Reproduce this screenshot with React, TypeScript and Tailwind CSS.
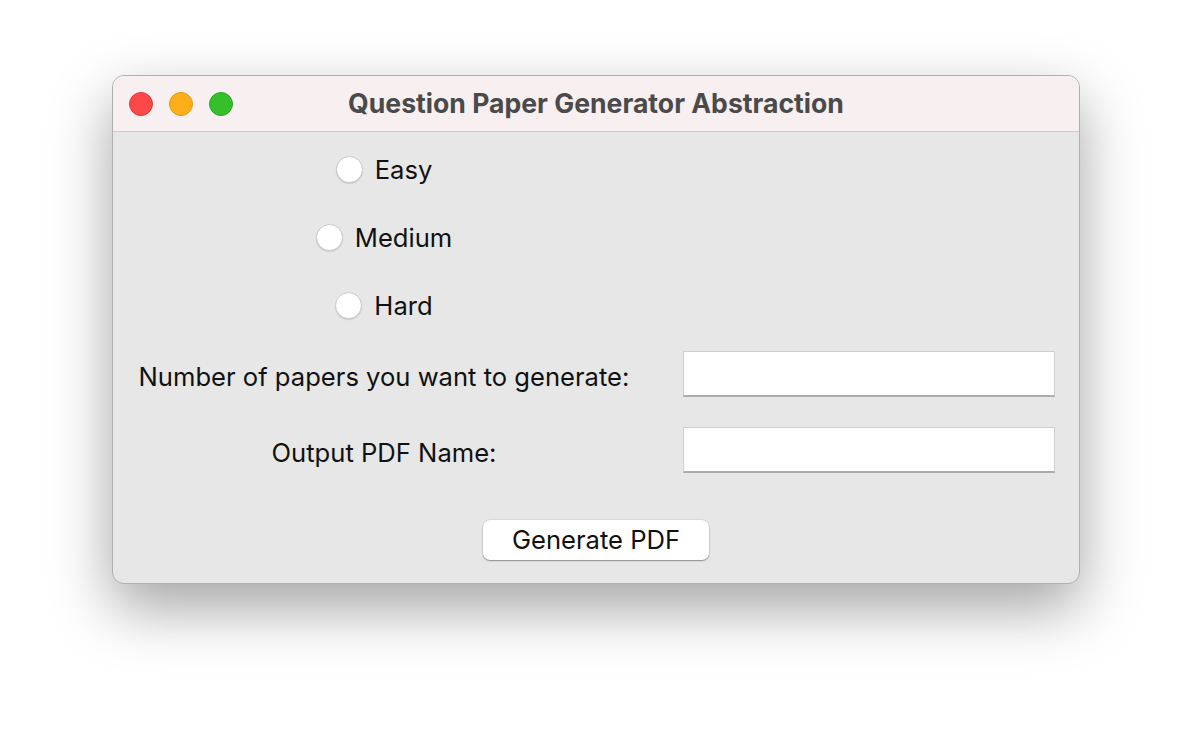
import React from "react";

const font = { fontFamily: "Inter, 'Noto Sans', 'Liberation Sans', sans-serif" };

const TrafficLights = () => (
  <div className="flex items-center gap-[16px] pl-[16px]">
    <span className="w-[24px] h-[24px] rounded-full bg-[#fd4848] border border-[#e0393a]" />
    <span className="w-[24px] h-[24px] rounded-full bg-[#fdae18] border border-[#e09a12]" />
    <span className="w-[24px] h-[24px] rounded-full bg-[#35c02b] border border-[#2ba723]" />
  </div>
);

const Radio = ({ label }: { label: string }) => (
  <div className="h-[68px] flex items-center justify-center gap-[12px]">
    <span className="w-[27px] h-[27px] rounded-full bg-white border border-[#c9c9c9] shadow-[0_1px_1px_rgba(0,0,0,0.12)]" />
    <span className="text-[25.6px] text-[#111] pt-[3px]">{label}</span>
  </div>
);

const Entry = () => (
  <div className="w-[372px] h-[46px] bg-white border border-[#cfcfcf] border-b-2 border-b-[#ababab]" />
);

export default function App() {
  return (
    <div style={font} className="w-[1192px] h-[732px] bg-white flex justify-center pt-[75px]">
      <div className="w-[968px] h-[509px] rounded-[12px] overflow-hidden bg-[#e7e7e7] border border-[#b0b0b0] shadow-[0_24px_60px_rgba(0,0,0,0.36)] flex flex-col">
        <div className="h-[56px] shrink-0 grid grid-cols-[1fr_auto_1fr] items-center bg-[#f8eff0] border-b border-[#cbcbcb]">
          <TrafficLights />
          <div className="text-[26.6px] font-bold text-[#4a4a4a]">
            Question Paper Generator Abstraction
          </div>
          <div />
        </div>

        <div className="flex flex-col pt-[3px]">
          <div className="ml-[14px] w-[514px] flex flex-col">
            <Radio label="Easy" />
            <Radio label="Medium" />
            <Radio label="Hard" />
          </div>

          <div className="mt-[12px] flex items-center">
            <div className="ml-[14px] w-[514px] text-center text-[25.6px] text-[#111] pt-[7px]">
              Number of papers you want to generate:
            </div>
            <div className="ml-[42px]">
              <Entry />
            </div>
          </div>

          <div className="mt-[30px] flex items-center">
            <div className="ml-[14px] w-[514px] text-center text-[25.6px] text-[#111] pt-[7px]">
              Output PDF Name:
            </div>
            <div className="ml-[42px]">
              <Entry />
            </div>
          </div>

          <div className="mt-[47px] flex justify-center">
            <button className="w-[226px] h-[40px] rounded-[7px] bg-white text-[25.6px] text-[#111] shadow-[0_1px_1.5px_rgba(0,0,0,0.35),0_0_0_0.5px_rgba(0,0,0,0.12)]">
              Generate PDF
            </button>
          </div>
        </div>
      </div>
    </div>
  );
}
